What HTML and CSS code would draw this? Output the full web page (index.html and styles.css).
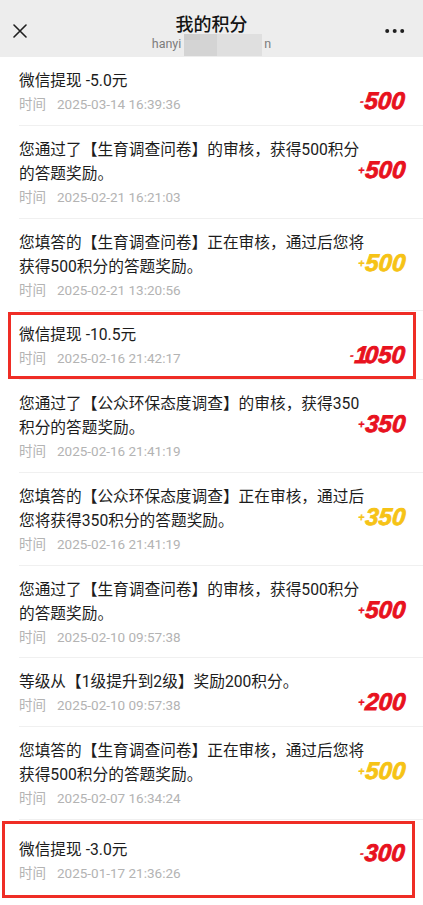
FILE: index.html
```html
<!DOCTYPE html>
<html lang="zh-CN">
<head>
<meta charset="utf-8">
<title>我的积分</title>
<link rel="stylesheet" href="styles.css">
</head>
<body>
<header class="topbar">
  <div class="bar-left">
    <svg class="close" width="14" height="14" viewBox="0 0 14 14"><path d="M1 1L13 13M13 1L1 13" stroke="#1f1f1f" stroke-width="1.6" stroke-linecap="round" fill="none"/></svg>
  </div>
  <div class="titles">
    <div class="title">我的积分</div>
    <div class="sub">hanyi<span class="mosaic"></span>n</div>
  </div>
  <div class="bar-right">
    <svg class="more" width="20" height="6" viewBox="0 0 20 6"><circle cx="2.2" cy="3" r="2"/><circle cx="9.7" cy="3" r="2"/><circle cx="17.2" cy="3" r="2"/></svg>
  </div>
</header>
<ul class="list">
  <li class="row">
    <div class="text"><p class="desc">微信提现 -5.0元</p><p class="time"><span class="label">时间</span>2025-03-14 16:39:36</p></div>
    <div class="amount red"><span class="sign">-</span>500</div>
  </li>
  <li class="row">
    <div class="text"><p class="desc">您通过了【生育调查问卷】的审核，获得500积分的答题奖励。</p><p class="time"><span class="label">时间</span>2025-02-21 16:21:03</p></div>
    <div class="amount red"><span class="sign">+</span>500</div>
  </li>
  <li class="row">
    <div class="text"><p class="desc">您填答的【生育调查问卷】正在审核，通过后您将获得500积分的答题奖励。</p><p class="time"><span class="label">时间</span>2025-02-21 13:20:56</p></div>
    <div class="amount yellow"><span class="sign">+</span>500</div>
  </li>
  <li class="row boxed">
    <div class="text"><p class="desc">微信提现 -10.5元</p><p class="time"><span class="label">时间</span>2025-02-16 21:42:17</p></div>
    <div class="amount red"><span class="sign">-</span><span class="one">1</span>050</div>
  </li>
  <li class="row">
    <div class="text"><p class="desc">您通过了【公众环保态度调查】的审核，获得350积分的答题奖励。</p><p class="time"><span class="label">时间</span>2025-02-16 21:41:19</p></div>
    <div class="amount red"><span class="sign">+</span>350</div>
  </li>
  <li class="row">
    <div class="text"><p class="desc">您填答的【公众环保态度调查】正在审核，通过后您将获得350积分的答题奖励。</p><p class="time"><span class="label">时间</span>2025-02-16 21:41:19</p></div>
    <div class="amount yellow"><span class="sign">+</span>350</div>
  </li>
  <li class="row">
    <div class="text"><p class="desc">您通过了【生育调查问卷】的审核，获得500积分的答题奖励。</p><p class="time"><span class="label">时间</span>2025-02-10 09:57:38</p></div>
    <div class="amount red"><span class="sign">+</span>500</div>
  </li>
  <li class="row">
    <div class="text"><p class="desc">等级从【1级提升到2级】奖励200积分。</p><p class="time"><span class="label">时间</span>2025-02-10 09:57:38</p></div>
    <div class="amount red"><span class="sign">+</span>200</div>
  </li>
  <li class="row">
    <div class="text"><p class="desc">您填答的【生育调查问卷】正在审核，通过后您将获得500积分的答题奖励。</p><p class="time"><span class="label">时间</span>2025-02-07 16:34:24</p></div>
    <div class="amount yellow"><span class="sign">+</span>500</div>
  </li>
  <li class="row boxed last">
    <div class="text"><p class="desc">微信提现 -3.0元</p><p class="time"><span class="label">时间</span>2025-01-17 21:36:26</p></div>
    <div class="amount red"><span class="sign">-</span>300</div>
  </li>
</ul>
</body>
</html>
```
FILE: styles.css
```css
* {
  box-sizing: border-box;
  margin: 0;
  padding: 0;
}

html, body {
  background: #ffffff;
}

body {
  width: 423px;
  min-height: 905px;
  font-family: Roboto, "Noto Sans CJK SC", sans-serif;
}

/* ---------- top bar ---------- */
.topbar {
  height: 57px;
  background: #ededed;
  display: grid;
  grid-template-columns: 60px 1fr 60px;
}

.bar-left {
  padding: 24px 0 0 13px;
}

.close {
  display: block;
}

.bar-right {
  padding: 28px 0 0 22px;
}

.more {
  display: block;
  fill: #1f1f1f;
}

.titles {
  text-align: center;
  padding-top: 11px;
}

.title {
  font-family: "Noto Sans CJK SC", sans-serif;
  font-size: 18px;
  line-height: 24px;
  font-weight: 500;
  color: #141414;
}

.sub {
  font-size: 12.5px;
  line-height: 18px;
  color: #7c7c7c;
}

.mosaic {
  display: inline-block;
  width: 78px;
  height: 22px;
  margin: -4px 2px -4px 3px;
  vertical-align: middle;
  background:
    linear-gradient(#cdcdcd, #cdcdcd) 0 0 / 16px 6px no-repeat,
    linear-gradient(90deg, #d4d4d4 0 33px, #dfdfdf 33px 100%);
}

/* ---------- list ---------- */
.list {
  list-style: none;
  padding-left: 19px;
}

.row {
  position: relative;
  display: grid;
  padding: 12px 18px 9.75px 0;
  border-bottom: 1px solid #f0f0f0;
}

.text,
.amount {
  grid-area: 1 / 1;
}

.text {
  padding-right: 36px;
}

.desc {
  font-size: 15.7px;
  line-height: 24px;
  color: #1c1c1c;
}

.time {
  font-size: 13.5px;
  line-height: 22px;
  color: #b3b3b3;
}

.label {
  margin-right: 11px;
}

.amount {
  justify-self: end;
  align-self: start;
  margin-top: 24px;
  display: flex;
  align-items: center;
  font-family: "Liberation Sans", Arial, sans-serif;
  font-style: italic;
  font-weight: 700;
  font-size: 24px;
  line-height: 16px;
  transform: skewX(-5deg);
  -webkit-text-stroke: 0.8px currentColor;
}

.amount .sign {
  font-size: 11px;
  line-height: 10px;
  margin-right: 1px;
  -webkit-text-stroke: 0.3px currentColor;
}

.amount .one {
  margin-right: -3px;
}

.red {
  color: #e8121e;
}

.yellow {
  color: #f6c316;
}

/* annotation boxes */
.boxed::after {
  content: "";
  position: absolute;
  top: 1px;
  bottom: 0;
  left: -11px;
  right: 7px;
  border: 3.5px solid #ef2d25;
  pointer-events: none;
}

.row.last {
  padding-top: 18px;
  border-bottom: none;
}

.row.last .amount {
  margin-top: 7px;
}

.row.last::after {
  left: -17px;
  right: 8px;
  bottom: -4.5px;
}
```
